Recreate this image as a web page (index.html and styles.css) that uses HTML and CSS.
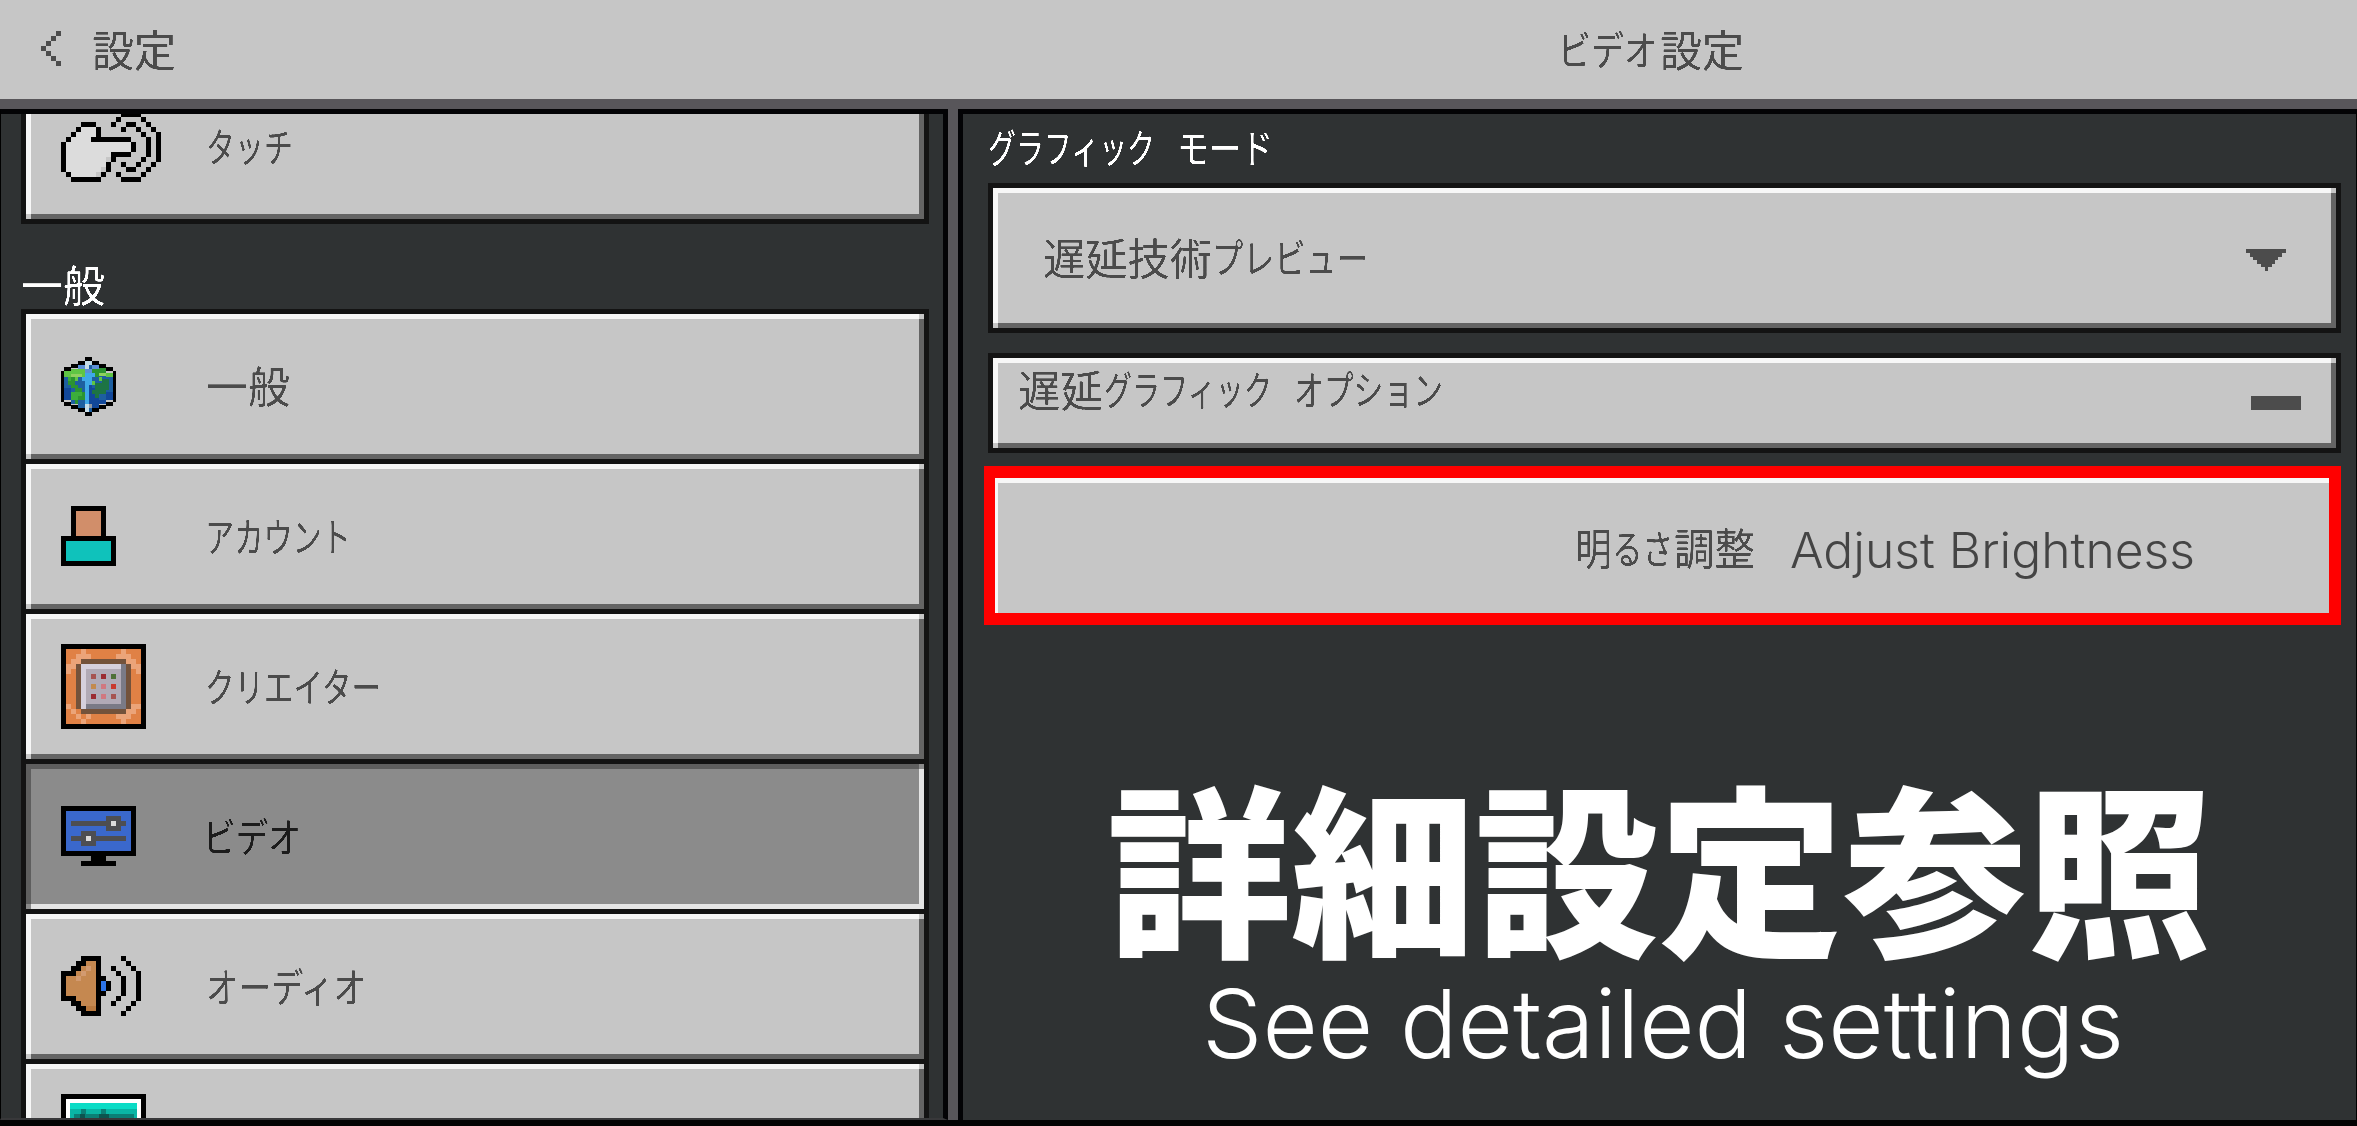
FILE: index.html
```html
<!DOCTYPE html>
<html lang="ja">
<head>
<meta charset="utf-8">
<title>ビデオ設定</title>
<link rel="stylesheet" href="styles.css">
</head>
<body>
<svg class="defs" width="0" height="0" aria-hidden="true">
  <filter id="crisp" x="-5%" y="-20%" width="110%" height="140%">
    <feComponentTransfer><feFuncA type="linear" slope="4" intercept="-1.4"/></feComponentTransfer>
  </filter>
</svg>
<header class="topbar">
  <div class="topbar-left">
    <svg class="px back" width="20" height="35" viewBox="0 0 4 7"><path fill="#4c4c4c" d="M3 0h1v1h-1zM2 1h1v1h-1zM1 2h1v1h-1zM0 3h1v1h-1zM1 4h1v1h-1zM2 5h1v1h-1zM3 6h1v1h-1z"/></svg>
    <svg class="label" width="90" height="60"><text x="1" y="47" textLength="84" lengthAdjust="spacingAndGlyphs">設定</text></svg>
  </div>
  <div class="topbar-title">
    <svg class="label" width="190" height="60"><text class="kana" x="-4" y="45" textLength="99" lengthAdjust="spacingAndGlyphs">ビデオ</text><text x="98" y="47" textLength="84" lengthAdjust="spacingAndGlyphs">設定</text></svg>
  </div>
</header>
<main class="body">
  <nav class="side">
    <div class="list list-cut">
      <div class="item bevel">
        <div class="icon"><svg class="px" width="100" height="70" viewBox="0 0 20 14">
          <path fill="#dcdcdc" d="M4 3h3v3h7v2h-4v1h-1v2h-1v1h-1v1h-5v-1h-1v-6h1v-1h1v-1h1z"/>
          <path d="M12 0h4v1h-4zM11 1h1v1h-1zM16 1h1v1h-1zM10 2h1v1h-1zM17 2h1v1h-1zM18 3h1v1h-1zM19 4h1v6h-1zM18 10h1v1h-1zM17 11h1v1h-1zM11 12h1v1h-1zM16 12h1v1h-1zM12 13h4v1h-4zM13 2h2v1h-2zM12 3h1v1h-1zM15 3h1v1h-1zM16 4h1v1h-1zM17 5h1v4h-1zM16 9h1v1h-1zM12 10h1v1h-1zM15 10h1v1h-1zM13 11h2v1h-2zM4 2h3v1h-3zM3 3h1v1h-1zM7 3h1v2h-1zM2 4h1v1h-1zM1 5h1v1h-1zM6 5h8v1h-8zM0 6h1v6h-1zM14 6h1v2h-1zM10 8h4v1h-4zM10 9h1v1h-1zM9 10h1v2h-1zM1 12h1v1h-1zM8 12h1v1h-1zM2 13h6v1h-6z"/>
        </svg></div>
        <svg class="label" width="100" height="60"><text class="kana" x="0" y="45" textLength="87" lengthAdjust="spacingAndGlyphs">タッチ</text></svg>
      </div>
    </div>
    <div class="section">
      <svg class="label light" width="100" height="60"><text x="0" y="47" textLength="84" lengthAdjust="spacingAndGlyphs">一般</text></svg>
    </div>
    <div class="list">
      <div class="item bevel">
        <div class="icon"><svg class="px" width="55" height="59" viewBox="0 0 16 15" preserveAspectRatio="none">
          <path fill="#1d5fa0" d="M7 1h2v1h2v1h2v1h2v7h-2v1h-2v1h-2v1h-2v-1h-2v-1h-2v-1h-2v-7h2v-1h2v-1h2z"/>
          <path fill="#12489a" d="M8 7h1v1h2v3h2v-2h2v2h-2v1h-2v1h-3zM1 8h2v3h-2z"/>
          <path fill="#5fc544" d="M1 3.6h2v-.6h4v1h1v1h-3v1h-3v-1h-1zM9 6h2v-1h2v-1h2v1h-3v1h-2v1h-2v-1z"/>
          <path fill="#8fd05e" d="M3 4.4h3v.8h-3zM11 4h2v.8h-2z"/>
          <path fill="#2b9431" d="M10 2.6h3v1.4h-2v1h-1v-1h-1v-1h1zM2 5h2v2h1v1h-2v-1h-1zM3 9h1v-1h2v1h1v2h-2v1h-1v-1h-1z"/>
          <path fill="#1d7444" d="M10 6.5h2v-1h2v3h-1v1h-2v1h-1v-1h-1v-1h1z"/>
          <path fill="#3cad3b" d="M3 9h3v1h-1v1h-2zM2 5h1v1h-1z"/>
          <path fill="#3fa9e8" d="M7 4h3v1h-1v2h-1v5h-1v-6h-1v-1h1z"/>
          <path fill="#5b8fd6" d="M5 2h2v1h2v-1h2v1h-2v1h-2v-1h-2z"/>
          <path fill="#c6dde8" d="M7 1h2v1h-1v1h-1zM7 12h1v2h-1z"/>
          <path fill="#8e98a3" d="M8 12h1v1h-1z"/>
          <path d="M7 0h2v1h-2zM5 1h2v1h-2zM9 1h2v1h-2zM3 1.8h2v.9h-2zM11 1.8h2v.9h-2zM1 2.6h2v.9h-2zM13 2.6h2v.9h-2zM0 3.5h1v7.9h-1zM15 3.5h1v7.9h-1zM1 11.4h2v1h-2zM13 11.4h2v1h-2zM3 12.2h2v1h-2zM11 12.2h2v1h-2zM5 13h2v1h-2zM9 13h2v1h-2zM7 14h2v1h-2z"/>
        </svg></div>
        <svg class="label" width="100" height="60"><text x="0" y="46" textLength="84" lengthAdjust="spacingAndGlyphs">一般</text></svg>
      </div>
      <div class="item bevel">
        <div class="icon"><svg class="px raised" width="55" height="60" viewBox="0 0 11 12">
          <path d="M2 0h7v6h2v6h-11v-6h2z"/><path fill="#d18e6a" d="M3 1h5v5h-5z"/><path fill="#0fc2bb" d="M1 7h9v4h-9z"/>
        </svg></div>
        <svg class="label" width="160" height="60"><text class="kana" x="-1" y="45" textLength="146" lengthAdjust="spacingAndGlyphs">アカウント</text></svg>
      </div>
      <div class="item bevel">
        <div class="icon"><svg class="px" width="85" height="85" viewBox="0 0 17 17">
          <path d="M0 0h17v17h-17z"/><path fill="#e08145" d="M1 1h15v15h-15z"/>
          <path fill="#eba479" d="M4 1h1v1h1v1h-2v1h-1v1h-1v1h-1v-2h1v-1h1v-1h1zM12 1h1v1h1v1h1v1h1v2h-1v-1h-1v-1h-1v-1h-2v-1h1zM1 12h1v1h1v1h1v1h2v-1h-1v2h-1v-1h-1v-1h-1v-1h-1zM15 12h1v1h-1v1h-1v1h-1v1h-1v-1h-1v-1h2v-1h1v-1h1z"/>
          <path fill="#73523b" d="M4 3h9v1h1v9h-1v1h-9v-1h-1v-9h1z"/>
          <path fill="#7a7a86" d="M4 4h9v9h-9z"/><path fill="#d5d0dd" d="M4 4h8v1h-7v8h-1z"/><path fill="#b1aab6" d="M5 5h7v7h-7z"/>
          <path fill="#a65351" d="M6 6h1v1h-1zM10 10h1v1h-1z"/><path fill="#9b2a31" d="M8 6h1v1h-1zM6 10h1v1h-1z"/><path fill="#4f7038" d="M10 6h1v1h-1z"/><path fill="#c38a4f" d="M6 8h1v1h-1z"/><path fill="#d07880" d="M8 8h1v1h-1zM8 10h1v1h-1z"/><path fill="#c9392f" d="M10 8h1v1h-1z"/>
        </svg></div>
        <svg class="label" width="190" height="60"><text class="kana" x="-1" y="45" textLength="176" lengthAdjust="spacingAndGlyphs">クリエイター</text></svg>
      </div>
      <div class="item bevel selected">
        <div class="icon"><svg class="px raised" width="75" height="60" viewBox="0 0 15 12">
          <path d="M0 0h15v10h-6v1h2v1h-7v-1h2v-1h-6z"/><path fill="#3a68cc" d="M1 1h13v8h-13z"/>
          <path fill="#4d4e52" d="M2 3h7v-1h3v1h1v1h-1v1h-3v-1h-7zM2 6h2v-1h3v1h6v1h-6v1h-3v-1h-2z"/><path fill="#dcdcdc" d="M10 3h1v1h-1zM5 6h1v1h-1z"/>
        </svg></div>
        <svg class="label dark" width="120" height="60"><text class="kana" x="-3" y="45" textLength="98" lengthAdjust="spacingAndGlyphs">ビデオ</text></svg>
      </div>
      <div class="item bevel">
        <div class="icon"><svg class="px raised" width="80" height="60" viewBox="0 0 16 12">
          <path d="M4 0h4v4h1v1h1v2h-1v1h-1v4h-4v-1h-1v-1h-1v-1h-2v-6h2v-1h1v-1h1zM12 0h1v1h-1zM13 1h1v1h-1zM14 2h1v1h-1zM15 3h1v6h-1zM14 9h1v1h-1zM13 10h1v1h-1zM12 11h1v1h-1zM10 2h1v1h-1zM11 3h1v1h-1zM12 4h1v4h-1zM11 8h1v1h-1zM10 9h1v1h-1z"/>
          <path fill="#c58850" d="M5 1h2v10h-2v-1h-1v-1h-1v-1h-2v-4h2v-1h1v-1h1z"/><path fill="#d29a70" d="M5 2h1v1h-1v1h-1v1h-1v-1h1v-1h1z"/><path fill="#b9793f" d="M5 10h2v1h-2z"/><path fill="#2d74e8" d="M8 5h1v2h-1z"/>
        </svg></div>
        <svg class="label" width="170" height="60"><text class="kana" x="0" y="45" textLength="160" lengthAdjust="spacingAndGlyphs">オーディオ</text></svg>
      </div>
      <div class="item bevel">
        <div class="icon"><svg class="px" width="85" height="85" viewBox="0 0 17 17">
          <path d="M0 0h17v17h-17z"/><path fill="#fff" d="M1 1h15v15h-15z"/><path fill="#0bdcc6" d="M1.8 1.8h13.4v13.4h-13.4z"/><path fill="#0ab5a5" d="M1.8 3h13.4v12h-13.4z"/><path fill="#0b7f76" d="M2.5 4h12v11h-12zM4 3h1v1h-1zM8 3h1v1h-1z"/><path fill="#0c544f" d="M3.8 4h1v1h-1zM7.5 4h2v1h-2z"/>
        </svg></div>
      </div>
    </div>
  </nav>
  <section class="content">
    <div class="heading">
      <svg class="label light" width="300" height="60"><text class="kana" x="2" y="45" textLength="167" lengthAdjust="spacingAndGlyphs">グラフィック</text><text class="kana" x="191" y="45" textLength="96" lengthAdjust="spacingAndGlyphs">モード</text></svg>
    </div>
    <div class="field dropdown bevel">
      <svg class="label" width="340" height="60"><text x="0" y="47" textLength="169" lengthAdjust="spacingAndGlyphs">遅延技術</text><text class="kana" x="169" y="45" textLength="156" lengthAdjust="spacingAndGlyphs">プレビュー</text></svg>
      <svg class="px arrow" width="40" height="22" viewBox="0 0 40 22"><path fill="#4c4c4c" d="M0 0h40v4h-4v4h-4v3h-3v4h-3v3h-4v4h-3v-4h-4v-3h-4v-4h-4v-3h-3v-4h-4z"/></svg>
    </div>
    <div class="field collapse bevel">
      <svg class="label" width="430" height="60"><text x="0" y="45" textLength="85" lengthAdjust="spacingAndGlyphs">遅延</text><text class="kana" x="86" y="43" textLength="168" lengthAdjust="spacingAndGlyphs">グラフィック</text><text class="kana" x="276" y="43" textLength="149" lengthAdjust="spacingAndGlyphs">オプション</text></svg>
      <div class="minus"></div>
    </div>
    <div class="highlight">
      <svg class="label" width="190" height="60"><text x="0" y="45" textLength="37" lengthAdjust="spacingAndGlyphs">明</text><text class="kana" x="37" y="44" textLength="61" lengthAdjust="spacingAndGlyphs">るさ</text><text x="99" y="45" textLength="81" lengthAdjust="spacingAndGlyphs">調整</text></svg>
      <svg class="latin" width="408" height="60"><text x="0" y="48" textLength="405" lengthAdjust="spacingAndGlyphs">Adjust Brightness</text></svg>
    </div>
    <div class="caption">
      <svg class="big" width="1104" height="200"><text x="0" y="165" textLength="1104" lengthAdjust="spacingAndGlyphs">詳細設定参照</text></svg>
      <svg class="sub" width="922" height="110"><text x="-2" y="78" textLength="922" lengthAdjust="spacingAndGlyphs">See detailed settings</text></svg>
    </div>
  </section>
</main>
</body>
</html>
```
FILE: styles.css
```css
* { box-sizing: border-box; }
body {
  margin: 0;
  width: 2357px;
  height: 1126px;
  overflow: hidden;
  background: #030303;
  font-family: "Noto Sans CJK JP", sans-serif;
}
.defs { display: block; height: 0; }
svg { display: block; flex: none; overflow: visible; }
.px { shape-rendering: crispEdges; }

.label { fill: #4c4c4c; font-size: 43px; font-weight: 400; filter: url(#crisp); }
.label .kana { font-size: 40px; }
.light { fill: #fff; }
.dark { fill: #1e1e1e; }

.topbar {
  display: flex;
  height: 109px;
  padding-top: 20px;
  background: #c6c6c6;
  border-bottom: 10px solid #58565a;
}
.topbar-left { display: flex; width: 1562px; padding-left: 41px; gap: 30px; }
.back { margin-top: 11px; }

.body { display: flex; height: 1011px; background: #58565a; gap: 10px; }
.side, .content {
  background: #2f3233;
  border-top: 5px solid #030305;
  overflow: hidden;
}
.side {
  width: 948px;
  height: 1011px;
  padding-left: 20px;
  border-left: 1px solid #000;
  border-right: 5px solid #030305;
  border-bottom: 2px solid #38383a;
}
.content {
  width: 1399px;
  padding-left: 21px;
  border-left: 5px solid #030305;
  border-right: 1px solid #000;
}

.list { width: 908px; border: 5px solid #131313; border-bottom: 0; }
.list-cut { margin-top: -45px; }
.item {
  display: flex;
  align-items: center;
  height: 150px;
  padding-left: 35px;
  border-bottom: 5px solid #131313;
}
.icon { width: 145px; flex: none; }
.raised { margin-bottom: 1px; }
.section { height: 85px; padding-top: 31px; margin-left: 0; }

.bevel {
  --hi: #f7f7f7;
  --lo: #646464;
  --face: #c6c6c6;
  background:
    linear-gradient(var(--hi), var(--hi)) 0 0 / calc(100% - 5px) 5px no-repeat,
    linear-gradient(var(--hi), var(--hi)) 0 0 / 5px calc(100% - 5px) no-repeat,
    linear-gradient(var(--lo), var(--lo)) 100% 100% / calc(100% - 5px) 5px no-repeat,
    linear-gradient(var(--lo), var(--lo)) 100% 100% / 5px calc(100% - 5px) no-repeat,
    var(--face);
  background-origin: padding-box;
  background-clip: padding-box;
}
.selected { --hi: #5e5e5e; --lo: #e4e4e4; --face: #8b8b8b; }

.heading { height: 69px; padding-top: 4px; margin-left: 2px; }
.field {
  display: flex;
  width: 1353px;
  margin-left: 4px;
  border: 5px solid #131313;
}
.dropdown { height: 150px; justify-content: space-between; padding: 40px 50px 0 50px; }
.arrow { margin-top: 21px; }
.collapse { height: 100px; margin-top: 20px; justify-content: space-between; padding: 4px 35px 0 25px; }
.minus { width: 50px; height: 14px; margin-top: 34px; background: #4c4c4c; }
.highlight {
  display: flex;
  width: 1357px;
  height: 159px;
  margin-top: 13px;
  padding: 42px 0 0 580px;
  gap: 25px;
  border: 12px solid #f00;
  border-left-width: 11px;
  background: linear-gradient(90deg, #f7f7f7 3px, transparent 3px), linear-gradient(#f7f7f7 5px, #c6c6c6 5px);
}
.latin { fill: #444; font: 350 49px Inter, sans-serif; }
.caption { padding-top: 153px; }
.big { margin-left: 123px; fill: #fff; font-size: 184px; font-weight: 900; }
.sub { margin: 2px 0 0 220px; fill: #fff; font: 350 95px Inter, sans-serif; }
```
